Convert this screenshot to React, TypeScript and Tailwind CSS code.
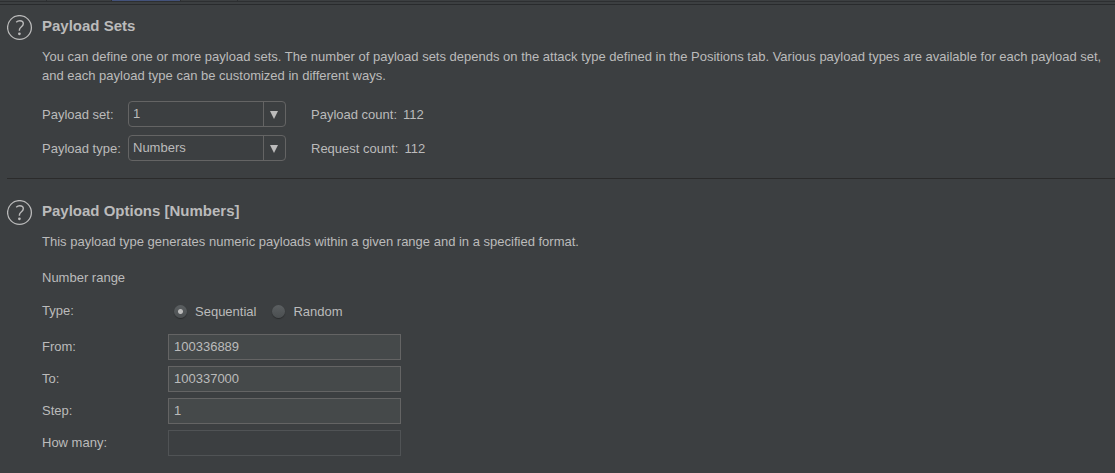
import { useId, useState } from "react";
import type { ReactNode } from "react";

function HelpButton({ topic }: { topic: string }) {
  return (
    <button type="button" aria-label={`Help: ${topic}`} className="h-[26px] w-[26px] shrink-0 text-[#bbbbbb]">
      <svg viewBox="0 0 26 26" width="26" height="26" fill="none" stroke="currentColor">
        <circle cx="12.5" cy="12.5" r="11.9" strokeWidth="1.3" />
        <path d="M9.2 7.2C10.2 6.3 11.4 5.8 12.8 5.8c2.2 0 3.5 1.1 3.5 2.9 0 1.5-.8 2.3-2.1 3.3-1.2.9-1.8 1.6-1.8 2.9v.9" strokeWidth="1.4" />
        <circle cx="12.4" cy="18.8" r="1.4" fill="currentColor" stroke="none" />
      </svg>
    </button>
  );
}

function Section({ title, children }: { title: string; children: ReactNode }) {
  return (
    <section className="flex gap-[9px] pl-[7px]">
      <HelpButton topic={title} />
      <div className="min-w-0 flex-1 pt-px">
        <h2 className="text-[15px] leading-5 font-bold">{title}</h2>
        {children}
      </div>
    </section>
  );
}

function SelectBox({ id, options }: { id: string; options: string[] }) {
  return (
    <div className="relative flex h-[26px] w-[158px] rounded-sm border border-[#646464]">
      <select id={id} className="w-full appearance-none bg-transparent pb-0.5 pl-1 outline-none">
        {options.map((option) => (
          <option key={option} className="bg-[#3c3f41]">
            {option}
          </option>
        ))}
      </select>
      <span className="pointer-events-none absolute inset-y-0 right-0 flex w-[22px] items-center border-l border-[#646464] pt-px pl-1.5">
        <svg viewBox="0 0 8 8" width="8" height="8" fill="#bbbbbb">
          <path d="M0 0h8L4 8z" />
        </svg>
      </span>
    </div>
  );
}

function PayloadRow({ label, options, countLabel, count }: { label: string; options: string[]; countLabel: string; count: number }) {
  const id = useId();
  return (
    <div className="flex items-center">
      <label htmlFor={id} className="w-[86px] whitespace-nowrap">
        {label}
      </label>
      <SelectBox id={id} options={options} />
      <span className="ml-[25px] flex gap-1.5">
        <span>{countLabel}</span>
        <output>{count}</output>
      </span>
    </div>
  );
}

function RadioOption({ label, checked, onChange }: { label: string; checked: boolean; onChange: () => void }) {
  return (
    <label className="flex items-center gap-2">
      <input
        type="radio"
        name="range-type"
        checked={checked}
        onChange={onChange}
        className="h-[13px] w-[13px] appearance-none rounded-full bg-linear-to-b from-[#5b5f61] to-[#4b4f51] shadow-[0_1px_1px_#292b2c] checked:bg-[radial-gradient(circle,#bbbbbb_2px,transparent_3px),linear-gradient(#5b5f61,#4b4f51)]"
      />
      {label}
    </label>
  );
}

function NumberField({ label, value, disabled = false }: { label: string; value: string; disabled?: boolean }) {
  const id = useId();
  return (
    <div className="flex items-center">
      <label htmlFor={id} className="w-[126px] pb-0.5">
        {label}
      </label>
      <input
        id={id}
        type="text"
        defaultValue={value}
        disabled={disabled}
        className="h-[26px] w-[233px] border border-[#646464] bg-[#45494a] px-[5px] pb-0.5 outline-none disabled:border-[#505355] disabled:bg-transparent"
      />
    </div>
  );
}

export default function App() {
  const [rangeType, setRangeType] = useState("Sequential");
  return (
    <div className="min-h-screen bg-[#3c3f41] font-['Liberation_Sans',Arial,sans-serif] text-[13px] leading-[19px] text-[#bbbbbb]">
      <div aria-hidden="true" className="h-[5px] border-b border-[#292b2d]">
        <div className="flex h-0.5 border-b border-[#2d2f31]">
          <span className="w-[47px] border-r border-[#2d2f31]" />
          <span className="w-[65px] border-r border-[#2d2f31]" />
          <span className="h-px w-[68px] bg-[#43527a]" />
          <span className="w-[58px] border-x border-[#2d2f31]" />
        </div>
      </div>
      <main className="pt-2.5">
        <Section title="Payload Sets">
          <p className="mt-[11px] pr-2">
            You can define one or more payload sets. The number of payload sets depends on the attack type defined in the Positions tab. Various payload types are available for each payload set, and each payload type can be customized in different ways.
          </p>
          <div className="mt-4 flex flex-col gap-2">
            <PayloadRow label="Payload set:" options={["1"]} countLabel="Payload count:" count={112} />
            <PayloadRow label="Payload type:" options={["Numbers"]} countLabel="Request count:" count={112} />
          </div>
        </Section>
        <hr className="mt-[17px] mb-[21px] ml-[7px] border-[#2b2b2b]" />
        <Section title="Payload Options [Numbers]">
          <p className="mt-[11px]">This payload type generates numeric payloads within a given range and in a specified format.</p>
          <h3 className="mt-[17px]">Number range</h3>
          <div role="radiogroup" aria-labelledby="range-type-label" className="mt-[14px] flex items-start">
            <span id="range-type-label" className="w-[132px]">
              Type:
            </span>
            <div className="flex gap-4 pt-px">
              {["Sequential", "Random"].map((type) => (
                <RadioOption key={type} label={type} checked={rangeType === type} onChange={() => setRangeType(type)} />
              ))}
            </div>
          </div>
          <div className="mt-[13px] flex flex-col gap-1.5">
            <NumberField label="From:" value="100336889" />
            <NumberField label="To:" value="100337000" />
            <NumberField label="Step:" value="1" />
            <NumberField label="How many:" value="" disabled />
          </div>
        </Section>
      </main>
    </div>
  );
}
